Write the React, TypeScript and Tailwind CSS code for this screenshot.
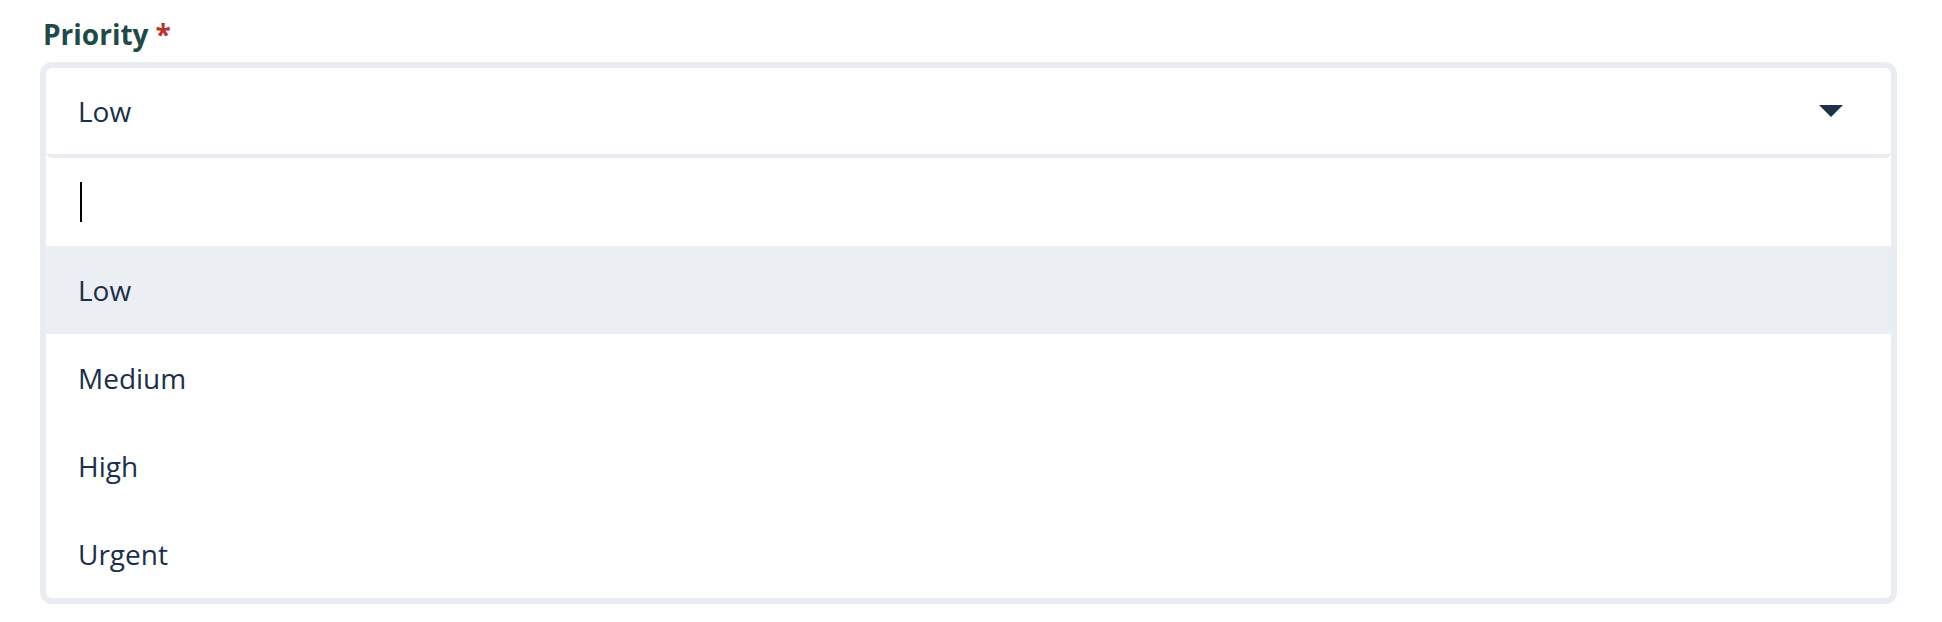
import { useState } from "react";

const options = ["Low", "Medium", "High", "Urgent"];

export default function App() {
  const [selected] = useState("Low");

  return (
    <div className="min-h-screen bg-white px-[40px] pt-[16px] font-['Open_Sans',sans-serif] text-[#1b2f4b]">
      <label className="ml-[3px] flex items-baseline gap-[7px] text-[28px] leading-[36px] font-bold text-[#1e4b48]">
        Priority
        <span className="text-[#b8322a]">*</span>
      </label>

      <div className="mt-[10px] w-[1857px] rounded-[12px] border-[6px] border-[#e9edf2] bg-white overflow-hidden">
        {/* current value */}
        <div className="flex h-[90px] items-center justify-between rounded-b-[6px] border-b-4 border-[#e9edf2] pl-[32px] pr-[48px] text-[28px]">
          <span>{selected}</span>
          <svg width="24" height="12" viewBox="0 0 24 12" className="text-[#1b3049]">
            <path d="M0 0 H24 L12 12 Z" fill="currentColor" />
          </svg>
        </div>

        {/* search */}
        <div className="flex h-[88px] items-center pl-[34px]">
          <div className="h-[40px] w-[2px] bg-black" />
        </div>

        {options.map((opt) => (
          <div
            key={opt}
            className={`flex h-[88px] items-center pl-[32px] text-[28px] ${
              opt === selected ? "bg-[#ebeef3]" : ""
            }`}
          >
            {opt}
          </div>
        ))}
      </div>
    </div>
  );
}
